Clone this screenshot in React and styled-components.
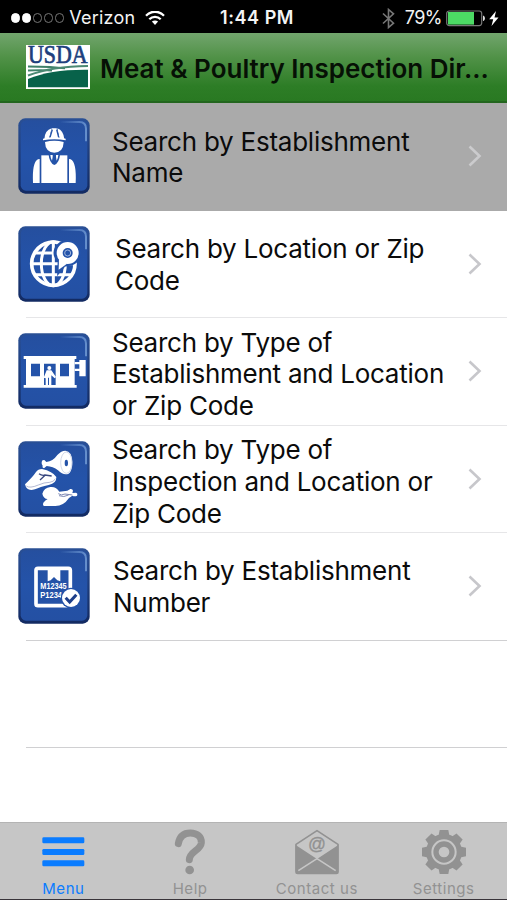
import React, { useState } from 'react';
import styled, { createGlobalStyle } from 'styled-components';

const GlobalStyle = createGlobalStyle`
  * {
    box-sizing: border-box;
  }

  body {
    margin: 0;
    background: #fff;
    font-family: Inter, 'Liberation Sans', sans-serif;
  }
`;

const Screen = styled.div`
  display: flex;
  flex-direction: column;
  width: 507px;
  height: 900px;
  overflow: hidden;
  background: #fff;
`;

/* ---------- status bar ---------- */

const StatusBar = styled.div`
  display: grid;
  grid-template-columns: 1fr auto 1fr;
  align-items: center;
  height: 33px;
  padding: 3px 7px 0 11px;
  background: #000;
  color: #f4f4f4;
  font-size: 18px;
  line-height: 30px;
`;

const StatusLeft = styled.div`
  display: flex;
  align-items: center;
`;

const StatusRight = styled.div`
  display: flex;
  align-items: center;
  justify-content: flex-end;
`;

const Signal = styled.div`
  display: flex;
  gap: 1.6px;
  margin-right: 5px;
`;

const SignalDot = styled.span`
  width: 9.4px;
  height: 9.4px;
  border-radius: 50%;
  border: 1px solid ${({ $on }) => ($on ? '#fff' : '#777')};
  background: ${({ $on }) => ($on ? '#fff' : 'transparent')};
`;

const Carrier = styled.span`
  margin-right: 10px;
  letter-spacing: 0.2px;
`;

const Clock = styled.span`
  padding-left: 3px;
  font-weight: 600;
  letter-spacing: 0.55px;
`;

const Percent = styled.span`
  margin: 0 4px 0 10px;
  letter-spacing: -0.5px;
`;

/* ---------- title bar ---------- */

const TitleBar = styled.header`
  display: flex;
  align-items: center;
  height: 70px;
  padding-left: 26px;
  background: linear-gradient(#72a56d 0%, #519248 35%, #2d7d26 78%, #297922 100%);
  border-bottom: 2px solid #23661e;
`;

const Title = styled.h1`
  margin: 3px 0 0 10px;
  color: #061005;
  font-size: 26px;
  font-weight: 600;
  line-height: 32px;
  letter-spacing: 0;
  white-space: nowrap;
`;

/* ---------- list ---------- */

const List = styled.main`
  flex: 1;
`;

const Row = styled.div`
  display: flex;
  align-items: center;
  height: 107.5px;
  padding: 0 25px 1px 18px;
  background: ${({ $active }) => ($active ? '#aaa' : 'transparent')};
  cursor: pointer;
`;

const Divider = styled.div`
  height: 1px;
  margin: -1px 0 0 26px;
  background: ${({ $strong }) => ($strong ? '#d0d0d2' : '#e6e6e8')};
`;

const EmptyRow = styled.div`
  height: 107.5px;
`;

const RowLabel = styled.div`
  flex: 1;
  margin-left: ${({ $indent }) => $indent}px;
  padding-top: ${({ $drop }) => $drop}px;
  color: #0b0b0b;
  font-size: 26px;
  line-height: 31.7px;
  letter-spacing: -0.24px;
  white-space: pre-line;
`;

const TileSvg = styled.svg`
  flex: none;
  width: 72px;
  height: 76px;
`;

const Chevron = styled.svg`
  flex: none;
  width: 14px;
  height: 22px;
  fill: none;
  stroke: ${({ $active }) => ($active ? '#cbcbcd' : '#c7c7cb')};
  stroke-width: 2.6;
`;

/* ---------- tab bar ---------- */

const TabBar = styled.nav`
  display: grid;
  grid-template-columns: repeat(4, 1fr);
  height: 78px;
  background: #c6c6c6;
  border-top: 1px solid #b4b4b4;
  border-bottom: 1.5px solid #39343a;
`;

const Tab = styled.button`
  display: flex;
  flex-direction: column;
  align-items: center;
  padding: 6px 0 0;
  border: 0;
  background: none;
  color: ${({ $active }) => ($active ? '#0a7cff' : '#929292')};
  font-family: inherit;
  cursor: pointer;
`;

const TabIcon = styled.svg`
  width: 46px;
  height: 46px;
`;

const TabLabel = styled.span`
  margin-top: 5px;
  font-size: 15px;
  line-height: 18px;
  letter-spacing: 0.55px;
`;

const WifiIcon = () => (
  <svg width="20" height="15" viewBox="0 0 20 15" fill="none" stroke="#fff" strokeWidth="2.3">
    <path d="M1 4.7C6-.6 14-.6 19 4.7" />
    <path d="M4.3 8.2c3.2-3.2 8.2-3.2 11.4 0" />
    <path d="M6.9 10.5c1.8-1.5 4.4-1.5 6.2 0L10 14z" fill="#fff" stroke="none" />
  </svg>
);

const BluetoothIcon = () => (
  <svg width="13" height="21" viewBox="0 0 13 21" fill="none" stroke="#777" strokeWidth="1.6">
    <path d="M1 5.5l10.5 9.7-5 4.3v-18l5 4.3L1 15.5" />
  </svg>
);

const BatteryIcon = () => (
  <svg width="54" height="17" viewBox="0 0 54 17">
    <rect x="0.7" y="1" width="35" height="14.6" rx="2.5" fill="none" stroke="#777" strokeWidth="1.2" />
    <path d="M2 2h26v12.6H2z" fill="#4cd964" />
    <path d="M37 5.5c2.6.8 2.6 4.8 0 5.6z" fill="#ddd" />
    <path d="M50 1l-6.8 8.2h4L45.5 16l7-8.5h-4z" fill="#fff" />
  </svg>
);

const LogoSvg = styled.svg`
  flex: none;
  width: 64px;
  height: 44px;
  overflow: visible;
`;

const UsdaLogo = () => (
  <LogoSvg viewBox="0 0 64 44">
    <rect width="64" height="44" fill="#fff" />
    <text
      x="2"
      y="18.3"
      fontFamily="'Liberation Serif', serif"
      fontSize="24.5"
      textLength="59.5"
      lengthAdjust="spacingAndGlyphs"
      fill="#1d3f7d"
      stroke="#1d3f7d"
      strokeWidth="0.7"
    >
      USDA
    </text>
    <path d="M2 42.200V34C18 27.500 36 24.500 62 24.800v17.400z" fill="#08624a" />
    <path d="M2 21.500c16 .2 26 .4 37 1.800M2 25.500c10-.6 17-.8 24 .1" fill="none" stroke="#3f8069" strokeWidth="1.8" />
    <path d="M2 30.500c17-6.500 34-9.300 60-9.500" fill="none" stroke="#4b8973" strokeWidth="2" />
  </LogoSvg>
);

const Tile = ({ children }) => (
  <TileSvg viewBox="24 24 216 228">
    <defs>
      <linearGradient id="tileFace" x1="0" y1="0" x2="0" y2="1">
        <stop offset="0" stopColor="#254f9f" />
        <stop offset="0.5" stopColor="#2453a9" />
        <stop offset="1" stopColor="#2450a3" />
      </linearGradient>
      <linearGradient id="tileEdge" x1="0" y1="0" x2="0" y2="1">
        <stop offset="0" stopColor="#2a5095" />
        <stop offset="1" stopColor="#122a62" />
      </linearGradient>
      <linearGradient id="tileShine" x1="0" y1="0" x2="1" y2="0">
        <stop offset="0" stopColor="#6f9bd6" stopOpacity="0" />
        <stop offset="1" stopColor="#7aa3da" />
      </linearGradient>
    </defs>
    <rect x="25" y="25" width="214" height="226" rx="21" fill="url(#tileEdge)" />
    <rect x="32" y="31" width="200" height="211" rx="16" fill="url(#tileFace)" />
    <path d="M150 36h58q20 0 20 20v38" fill="none" stroke="url(#tileShine)" strokeWidth="6" opacity="0.75" />
    {children}
  </TileSvg>
);

const WorkerGlyph = () => (
  <g fill="#fff">
    <path d="M103 88q1-27 22-33l-8 31zM126 55h14l7 31h-28zM142 55q19 7 21 33l-14-2z" />
    <path d="M119 86l8-27M147 86l-7-27" stroke="#2453a9" strokeWidth="4" />
    <path d="M99 86q34-8 68 0v5q-34-7-68 0z" />
    <path d="M105 96q28-7 56 0-1 31-28 32-27-1-28-32z" />
    <path d="M94 136h78v83H94z" />
    <path d="M116 134q2 24 17 31 15-7 17-31z" fill="#2453a9" />
    <path d="M121 135h7v6l-2 11q-4-6-5-17zM145 135h-7v6l2 11q4-6 5-17z" />
    <path d="M89 147v72H69q-3-62 15-71zM177 147v72h20q3-62-15-71z" />
  </g>
);

const GlobeGlyph = () => (
  <g>
    <g fill="none" stroke="#fff">
      <circle cx="130" cy="137" r="65" strokeWidth="11" />
      <ellipse cx="130" cy="137" rx="36" ry="66" strokeWidth="9" />
      <path d="M130 70v134M64 137h132M74 105h112M74 170h112" strokeWidth="9" />
    </g>
    <path
      d="M173 73a32 32 0 0 1 4 64l-15 3-14 17 1-27A32 32 0 0 1 173 73z"
      fill="#2453a9"
      stroke="#2453a9"
      strokeWidth="12"
    />
    <path d="M147 123l24 14-25 18z" fill="#fff" />
    <circle cx="173" cy="105" r="23" fill="none" stroke="#fff" strokeWidth="20" />
    <circle cx="173" cy="105" r="15" fill="#2453a9" />
    <circle cx="173" cy="105" r="9" fill="#2453a9" stroke="#dce5f5" strokeWidth="2" />
  </g>
);

const StoreGlyph = () => (
  <g fill="#fff">
    <path d="M41 93h158v9h-5v78h6v8H41v-8h7v-78h-7z" />
    <path d="M194 111h14v-6h19v49h-19v-16h-14v-7h14v-13h-14z" />
    <g fill="#2453a9">
      <path d="M63 116h27v38H63zM102 116h35v64h-35zM150 116h27v38h-27z" />
    </g>
    <circle cx="118" cy="129" r="6" />
    <path d="M110 136h14l14 20-4 4-10-9v29h-7v-22h-3v22h-7v-20l-6-2z" />
  </g>
);

const MeatGlyph = () => (
  <g>
    <path
      d="M95 88q0-8 8-7l6 6q20-2 33-21 12-13 24-13 20 2 21 33 0 38-20 38-11 0-23-12-15-12-34-13l-7 6q-7 0-5-7-4-4-3-10z"
      fill="#fff"
    />
    <ellipse cx="169" cy="89" rx="17" ry="32" fill="#fff" stroke="#b9c4de" strokeWidth="2" />
    <ellipse cx="169" cy="90" rx="5" ry="10" fill="#2453a9" />
    <path
      d="M45 154q24-23 33-37 6-9 18-9 32 7 43 24 1 19-23 24-26 6-41 13-25 8-30-15z"
      fill="#fff"
    />
    <path d="M49 159q10 8 36-3 17-8 34-8 14-2 17-11" fill="none" stroke="#8d96bb" strokeWidth="2" />
    <path d="M87 122q9 7 18 4l20 3M106 126l-16 15" fill="none" stroke="#39477f" strokeWidth="4" />
    <path
      d="M97 182q5-18 24-20 18-2 27 14l24-3 9-5q7-1 8 5l-2 7 11-1q6 2 3 9-6 4-14 0l-10 7q-17 25-43 24H103q-6-2-3-10 6-8 13-11-13-1-16-16z"
      fill="#fff"
    />
    <path d="M145 182q9 7 20 1l22 3M147 188q14 6 29-2" fill="none" stroke="#7d88b4" strokeWidth="3" />
  </g>
);

const NumberGlyph = () => (
  <g>
    <rect x="78" y="85" width="103" height="112" rx="6" fill="none" stroke="#fff" strokeWidth="11" />
    <path d="M113 84h38v40l-9-3-10-10-10 10-9 3z" fill="#fff" />
    <g fontFamily="'Liberation Sans', sans-serif" fontSize="25" fontWeight="700" fill="#fff">
      <text x="91" y="146" textLength="79" lengthAdjust="spacingAndGlyphs">M12345</text>
      <text x="91" y="174" textLength="65" lengthAdjust="spacingAndGlyphs">P1234</text>
    </g>
    <circle cx="183" cy="174" r="31" fill="#2453a9" />
    <circle cx="183" cy="174" r="27" fill="#fff" />
    <path d="M167 173l12 13 20-22" fill="none" stroke="#1d3e8a" strokeWidth="9" />
  </g>
);

const MenuIcon = () => (
  <TabIcon viewBox="123 42 138 138" fill="currentColor">
    <rect x="130" y="67" width="126" height="18" rx="4" />
    <rect x="130" y="102" width="126" height="18" rx="4" />
    <rect x="130" y="136" width="126" height="18" rx="4" />
  </TabIcon>
);

const HelpIcon = () => (
  <TabIcon viewBox="501 42 138 138">
    <path
      d="M535 86c4-24 18-32 36-32 21 0 34 12 33 29-2 24-35 25-36 51"
      fill="none"
      stroke="currentColor"
      strokeWidth="21"
      strokeLinecap="round"
    />
    <circle cx="569" cy="165" r="13" fill="currentColor" />
  </TabIcon>
);

const ContactIcon = () => (
  <TabIcon viewBox="123 42 138 138">
    <path
      d="M129 88l63-41 63 41v82q0 5-5 5H134q-5 0-5-5z"
      fill="none"
      stroke="currentColor"
      strokeWidth="5"
      strokeLinejoin="round"
    />
    <path d="M128 90l64 42 64-42v78q0 7-7 7H135q-7 0-7-7z" fill="currentColor" />
    <path d="M136 167l56-36 56 36" fill="none" stroke="#c6c6c6" strokeWidth="5" />
    <text
      x="192"
      y="106"
      textAnchor="middle"
      fontFamily="'Liberation Sans', sans-serif"
      fontSize="53"
      fill="currentColor"
      stroke="currentColor"
      strokeWidth="1"
    >
      @
    </text>
  </TabIcon>
);

const GEAR_TEETH = [0, 45, 90, 135, 180, 225, 270, 315];

const SettingsIcon = () => (
  <TabIcon viewBox="503 42 138 138">
    <g fill="currentColor">
      <circle cx="572" cy="111" r="54" />
      {GEAR_TEETH.map((angle) => (
        <path key={angle} d="M555 66l4-21h26l4 21z" transform={`rotate(${angle} 572 111)`} />
      ))}
    </g>
    <g fill="none" stroke="#c6c6c6">
      <circle cx="572" cy="111" r="35" strokeWidth="6" />
    </g>
    <circle cx="572" cy="111" r="16" fill="#c6c6c6" />
  </TabIcon>
);

const ROWS = [
  { label: 'Search by Establishment\nName', glyph: WorkerGlyph, indent: 22, drop: 2 },
  { label: 'Search by Location or Zip\nCode', glyph: GlobeGlyph, indent: 25, drop: 2 },
  { label: 'Search by Type of\nEstablishment and Location\nor Zip Code', glyph: StoreGlyph, indent: 22, drop: 6 },
  { label: 'Search by Type of\nInspection and Location or\nZip Code', glyph: MeatGlyph, indent: 22, drop: 6 },
  { label: 'Search by Establishment\nNumber', glyph: NumberGlyph, indent: 23, drop: 1 },
];

const TABS = [
  { label: 'Menu', icon: MenuIcon },
  { label: 'Help', icon: HelpIcon },
  { label: 'Contact us', icon: ContactIcon },
  { label: 'Settings', icon: SettingsIcon },
];

const App = () => {
  const [selected, setSelected] = useState(0);
  const [tab, setTab] = useState('Menu');

  return (
    <>
      <GlobalStyle />
      <Screen>
        <StatusBar>
          <StatusLeft>
            <Signal>
              {[1, 1, 0, 0, 0].map((on, i) => (
                <SignalDot key={i} $on={on} />
              ))}
            </Signal>
            <Carrier>Verizon</Carrier>
            <WifiIcon />
          </StatusLeft>
          <Clock>1:44 PM</Clock>
          <StatusRight>
            <BluetoothIcon />
            <Percent>79%</Percent>
            <BatteryIcon />
          </StatusRight>
        </StatusBar>

        <TitleBar>
          <UsdaLogo />
          <Title>Meat &amp; Poultry Inspection Dir...</Title>
        </TitleBar>

        <List>
          {ROWS.map(({ label, glyph: Glyph, indent, drop }, i) => (
            <React.Fragment key={label}>
              <Row $active={selected === i} onClick={() => setSelected(i)}>
                <Tile>
                  <Glyph />
                </Tile>
                <RowLabel $indent={indent} $drop={drop}>{label}</RowLabel>
                <Chevron $active={selected === i} viewBox="0 0 14 22">
                  <path d="M1.5 1.5l10 9.5-10 9.5" />
                </Chevron>
              </Row>
              {selected !== i && <Divider $strong={i === ROWS.length - 1} />}
            </React.Fragment>
          ))}
          <EmptyRow />
          <Divider $strong />
        </List>

        <TabBar>
          {TABS.map(({ label, icon: Icon }) => (
            <Tab key={label} $active={tab === label} onClick={() => setTab(label)}>
              <Icon />
              <TabLabel>{label}</TabLabel>
            </Tab>
          ))}
        </TabBar>
      </Screen>
    </>
  );
};

export default App;
